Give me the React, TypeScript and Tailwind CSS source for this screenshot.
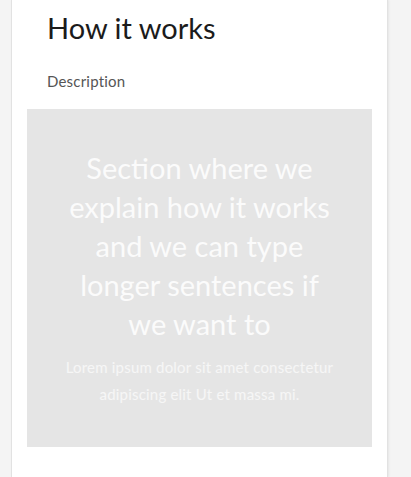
export default function App() {
  return (
    <div className="min-h-[477px] h-[477px] overflow-hidden bg-[#f4f4f4] font-['Lato',sans-serif]">
      <div className="ml-[11px] h-full w-[377px] border-x border-[#e2e2e2] bg-white px-[15px] shadow-[1px_0_2px_rgba(0,0,0,0.06)]">
        <h1 className="pl-5 pt-[10px] text-[29px] leading-[36px] font-normal text-[#1b1b1b]">How it works</h1>
        <p className="mt-[25px] pl-5 text-[15px] leading-[20px] tracking-[0.2px] text-[#555]">Description</p>
        <div className="mt-[18px] bg-[#e5e5e5] px-6 pt-[39px] pb-[39px] text-center">
          <h2 className="text-[29px] leading-[39px] font-normal text-[#fbfbfb]">
            Section where we
            <br />
            explain how it works
            <br />
            and we can type
            <br />
            longer sentences if
            <br />
            we want to
          </h2>
          <p className="mt-[11px] text-[15px] leading-[27px] tracking-[0.2px] text-white/65">
            Lorem ipsum dolor sit amet consectetur
            <br />
            adipiscing elit Ut et massa mi.
          </p>
        </div>
      </div>
    </div>
  );
}
